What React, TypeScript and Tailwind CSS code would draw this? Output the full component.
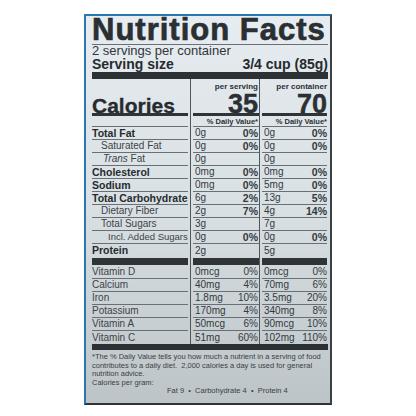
import React from "react";

type Row = {
  label: React.ReactNode;
  bold?: boolean;
  indent?: number;
  small?: boolean;
  a: string;
  ap?: string;
  b: string;
  bp?: string;
};

const nutrients: Row[] = [
  { label: "Total Fat", bold: true, a: "0g", ap: "0%", b: "0g", bp: "0%" },
  { label: "Saturated Fat", indent: 9, a: "0g", ap: "0%", b: "0g", bp: "0%" },
  { label: (<span><i>Trans</i>&nbsp;Fat</span>), indent: 11, a: "0g", b: "0g" },
  { label: "Cholesterol", bold: true, a: "0mg", ap: "0%", b: "0mg", bp: "0%" },
  { label: "Sodium", bold: true, a: "0mg", ap: "0%", b: "5mg", bp: "0%" },
  { label: "Total Carbohydrate", bold: true, a: "6g", ap: "2%", b: "13g", bp: "5%" },
  { label: "Dietary Fiber", indent: 9, a: "2g", ap: "7%", b: "4g", bp: "14%" },
  { label: "Total Sugars", indent: 9, a: "3g", b: "7g" },
  { label: "Incl. Added Sugars", indent: 16, small: true, a: "0g", ap: "0%", b: "0g", bp: "0%" },
  { label: "Protein", bold: true, a: "2g", b: "5g" },
];

const vitamins: Row[] = [
  { label: "Vitamin D", a: "0mcg", ap: "0%", b: "0mcg", bp: "0%" },
  { label: "Calcium", a: "40mg", ap: "4%", b: "70mg", bp: "6%" },
  { label: "Iron", a: "1.8mg", ap: "10%", b: "3.5mg", bp: "20%" },
  { label: "Potassium", a: "170mg", ap: "4%", b: "340mg", bp: "8%" },
  { label: "Vitamin A", a: "50mcg", ap: "6%", b: "90mcg", bp: "10%" },
  { label: "Vitamin C", a: "51mg", ap: "60%", b: "102mg", bp: "110%" },
];

const line = "border-[#687075]";

function NRow({ r, vit, last }: { r: Row; vit?: boolean; last?: boolean }) {
  const bb = last ? "" : `border-b ${line}`;
  const pctCls = vit ? "font-normal text-[10px]" : "font-bold text-[10.5px]";
  return (
    <div className="grid grid-cols-[98px_69px_68px] h-[13px]">
      <div className="pr-[2px]">
        <div
          className={`h-full ${bb} flex items-center leading-none whitespace-nowrap ${
            r.bold
              ? "font-bold text-[10.5px] text-[#262b2f]"
              : r.small
              ? "text-[9.5px] text-[#3d4347]"
              : "text-[10px] text-[#3d4347]"
          }`}
          style={{ paddingLeft: r.indent ?? 0 }}
        >
          {r.label}
        </div>
      </div>
      <div className="border-l border-[#50575b] pl-[2px]">
        <div className={`h-full ${bb} flex items-center justify-between pl-[2px] pr-[1px] leading-none text-[#33393d]`}>
          <span className="text-[10px]">{r.a}</span>
          <span className={pctCls}>{r.ap ?? ""}</span>
        </div>
      </div>
      <div className="border-l border-[#50575b] pl-[2px]">
        <div className={`h-full ${bb} flex items-center justify-between pl-[2px] leading-none text-[#33393d]`}>
          <span className="text-[10px]">{r.b}</span>
          <span className={pctCls}>{r.bp ?? ""}</span>
        </div>
      </div>
    </div>
  );
}

function SplitBar({ h }: { h: string }) {
  return (
    <div className={`grid grid-cols-[98px_69px_68px] ${h}`}>
      <div className="pr-[2px] py-[1px]">
        <div className="h-full bg-[#2f3437]" />
      </div>
      <div className="border-l border-[#50575b] pl-[2px] py-[1px]">
        <div className="h-full bg-[#2f3437]" />
      </div>
      <div className="border-l border-[#50575b] pl-[2px] py-[1px]">
        <div className="h-full bg-[#2f3437]" />
      </div>
    </div>
  );
}

export default function App() {
  return (
    <div className="w-[416px] h-[416px] bg-white pl-[84px] pt-[14px] font-['Liberation_Sans',Arial,sans-serif]">
      <div className="w-[248px] h-[391px] border-l-2 border-t-2 border-[#2a78b2] border-r-2 border-r-[#3a4044] border-b-2 border-b-[#2f3437] bg-gradient-to-b from-[#e6ecef] via-[#d9e0e3] to-[#bcc4c7] pl-[6px] pr-[2px] text-[#2b3034]">
        {/* Title */}
        <div className={`h-[29px] border-b ${line} leading-[28px] text-[31px] font-bold tracking-[1px] whitespace-nowrap text-[#2a2f33] [-webkit-text-stroke:0.7px_#2a2f33]`}>
          Nutrition Facts
        </div>
        <div className="h-[12px] leading-[12px] text-[13px] text-[#30363a] whitespace-nowrap">2 servings per container</div>
        <div className="h-[14px] leading-[14px] text-[14px] font-bold flex justify-between whitespace-nowrap text-[#262b2f]">
          <span>Serving size</span>
          <span>3/4 cup (85g)</span>
        </div>
        <div className="mt-[1px] h-[7px] bg-[#2c3134]" />

        {/* Calories */}
        <div className="grid grid-cols-[98px_69px_68px] h-[33px]">
          <div className="flex items-end pb-[2px]">
            <span className="text-[21px] font-bold leading-none text-[#262b2f] [-webkit-text-stroke:0.3px_#262b2f]">Calories</span>
          </div>
          <div className="border-l border-[#50575b] flex flex-col items-end pr-[1px]">
            <span className="text-[8px] font-bold leading-none mt-[4px]">per serving</span>
            <span className="text-[27px] font-bold leading-none [-webkit-text-stroke:0.4px_#262b2f]">35</span>
          </div>
          <div className="border-l border-[#50575b] flex flex-col items-end">
            <span className="text-[8px] font-bold leading-none mt-[4px]">per container</span>
            <span className="text-[27px] font-bold leading-none [-webkit-text-stroke:0.4px_#262b2f]">70</span>
          </div>
        </div>
        <SplitBar h="h-[5px]" />
        <div className="grid grid-cols-[98px_69px_68px] h-[10px]">
          <div className="pr-[2px]">
            <div className={`h-full border-b ${line}`} />
          </div>
          <div className="border-l border-[#50575b] pl-[2px]">
            <div className={`h-full border-b ${line} flex items-center justify-end pr-[1px] text-[7.5px] font-bold leading-none`}>
              % Daily Value*
            </div>
          </div>
          <div className="border-l border-[#50575b] pl-[2px]">
            <div className={`h-full border-b ${line} flex items-center justify-end text-[7.5px] font-bold leading-none`}>
              % Daily Value*
            </div>
          </div>
        </div>

        {nutrients.map((r, i) => (
          <NRow key={i} r={r} last={i === nutrients.length - 1} />
        ))}
        <SplitBar h="h-[9px]" />
        {vitamins.map((r, i) => (
          <NRow key={i} r={r} vit last={i === vitamins.length - 1} />
        ))}
        <div className="h-[6px] bg-[#2c3134]" />

        {/* Footnote */}
        <div className="pt-[3px] text-[7.5px] leading-[8.6px] text-[#3a4044] pr-[6px]">
          <div>*The % Daily Value tells you how much a nutrient in a serving of food</div>
          <div>contributes to a daily diet.&nbsp; 2,000 calories a day is used for general</div>
          <div>nutrition advice.</div>
          <div>Calories per gram:</div>
          <div className="pl-[75px] whitespace-nowrap">Fat 9&nbsp;&nbsp;•&nbsp;&nbsp;Carbohydrate 4&nbsp;&nbsp;•&nbsp;&nbsp;Protein 4</div>
        </div>
      </div>
    </div>
  );
}
